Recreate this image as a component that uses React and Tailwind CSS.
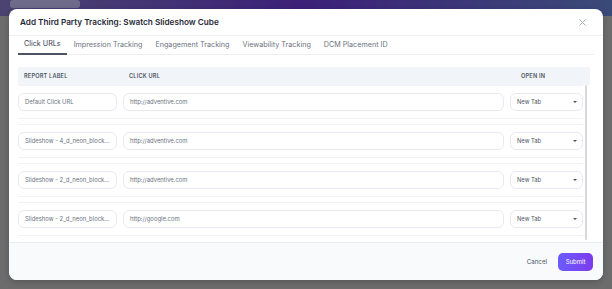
import React from "react";

const rows = [
  { label: "Default Click URL", url: "http://adventive.com" },
  { label: "Slideshow - 4_d_neon_block...", url: "http://adventive.com" },
  { label: "Slideshow - 2_d_neon_block...", url: "http://adventive.com" },
  { label: "Slideshow - 2_d_neon_block...", url: "http://google.com" },
];

const tabs = ["Click URLs", "Impression Tracking", "Engagement Tracking", "Viewability Tracking", "DCM Placement ID"];

function Row({ label, url }) {
  return (
    <div className="flex items-center gap-[6px] border-y border-[#f1f3f6] py-[7px] mb-[5px]">
      <div className="w-[99px] h-[18px] flex items-center px-[6px] rounded-[6px] border border-[#e6e9ef] bg-white text-[5.9px] text-[#6b7280] whitespace-nowrap overflow-hidden">
        {label}
      </div>
      <div className="flex-1 h-[18px] flex items-center px-[6px] rounded-[6px] border border-[#e6e9ef] bg-white text-[5.9px] text-[#6b7280]">
        {url}
      </div>
      <div className="w-[73px] h-[18px] flex items-center justify-between pl-[6px] pr-[5px] rounded-[6px] border border-[#e6e9ef] bg-white text-[5.8px] text-[#4b5563]">
        <span>New Tab</span>
        <span className="w-0 h-0 border-l-[2px] border-r-[2px] border-t-[2.5px] border-l-transparent border-r-transparent border-t-[#4b5563]" />
      </div>
    </div>
  );
}

export default function App() {
  return (
    <div
      className="relative w-[612px] h-[289px] overflow-hidden bg-[#6c6c6c]"
      style={{ fontFamily: "Inter, 'Noto Sans', sans-serif" }}
    >
      {/* blurred page behind the overlay */}
      <div className="absolute inset-x-0 top-0 h-[16px] bg-gradient-to-r from-[#4b4470] via-[#3c1f78] to-[#3a4a78]" />
      <div className="absolute left-[10px] top-0 w-[70px] h-[8px] rounded-[3px] bg-[#6e6a8a]" />

      <div className="relative p-[9px]">
        <div className="h-[271px] rounded-[8px] bg-white flex flex-col overflow-hidden shadow-[0_2px_6px_rgba(0,0,0,0.2)]">
          {/* header */}
          <div className="h-[27px] shrink-0 flex items-center justify-between pl-[11px] pr-[17px] pt-[1px] border-b border-[#eef0f4]">
            <span className="text-[8.2px] font-semibold text-[#1f2937]">Add Third Party Tracking: Swatch Slideshow Cube</span>
            <svg width="7" height="7" viewBox="0 0 10 10" className="text-[#9ca3af]">
              <path d="M1 1L9 9M9 1L1 9" stroke="currentColor" strokeWidth="1.2" strokeLinecap="round" />
            </svg>
          </div>

          {/* tabs */}
          <div className="mx-[9px] h-[19px] shrink-0 flex border-b border-[#eceef2]">
            {tabs.map((t, i) => (
              <div
                key={t}
                className={
                  i === 0
                    ? "px-[6px] mr-[1px] flex items-center text-[7.2px] text-[#374151] border-b-[2px] border-[#4b5563] -mb-[1px]"
                    : "px-[6px] mr-[1px] flex items-center text-[7.2px] text-[#6b7280]"
                }
              >
                {t}
              </div>
            ))}
          </div>

          {/* table */}
          <div className="relative flex-1 min-h-0 overflow-hidden mt-[12px] ml-[9px] mr-[13px]">
            <div className="h-[18px] flex items-center bg-[#f1f4f8] text-[5.6px] font-semibold uppercase text-[#4b5563] tracking-[0.2px]">
              <span className="w-[105px] pl-[6px]">Report Label</span>
              <span className="flex-1 pl-[6px]">Click URL</span>
              <span className="w-[69px]">Open In</span>
            </div>
            <div className="pr-[7px]">
              {rows.map((r, i) => (
                <Row key={i} {...r} />
              ))}
            </div>
            <div className="absolute right-[3px] top-[18px] bottom-[2px] w-[2px] rounded-full bg-[#d6d8dc]" />
          </div>

          {/* footer */}
          <div className="h-[38px] shrink-0 flex items-center justify-end gap-[11px] pr-[10px] bg-[#f8fafc] border-t border-[#e8ecf1]">
            <span className="text-[6.2px] text-[#4b5563]">Cancel</span>
            <button className="w-[35px] h-[18px] rounded-[5px] bg-gradient-to-r from-[#6a5cff] to-[#7c3aed] text-white text-[6px]">
              Submit
            </button>
          </div>
        </div>
      </div>
    </div>
  );
}
